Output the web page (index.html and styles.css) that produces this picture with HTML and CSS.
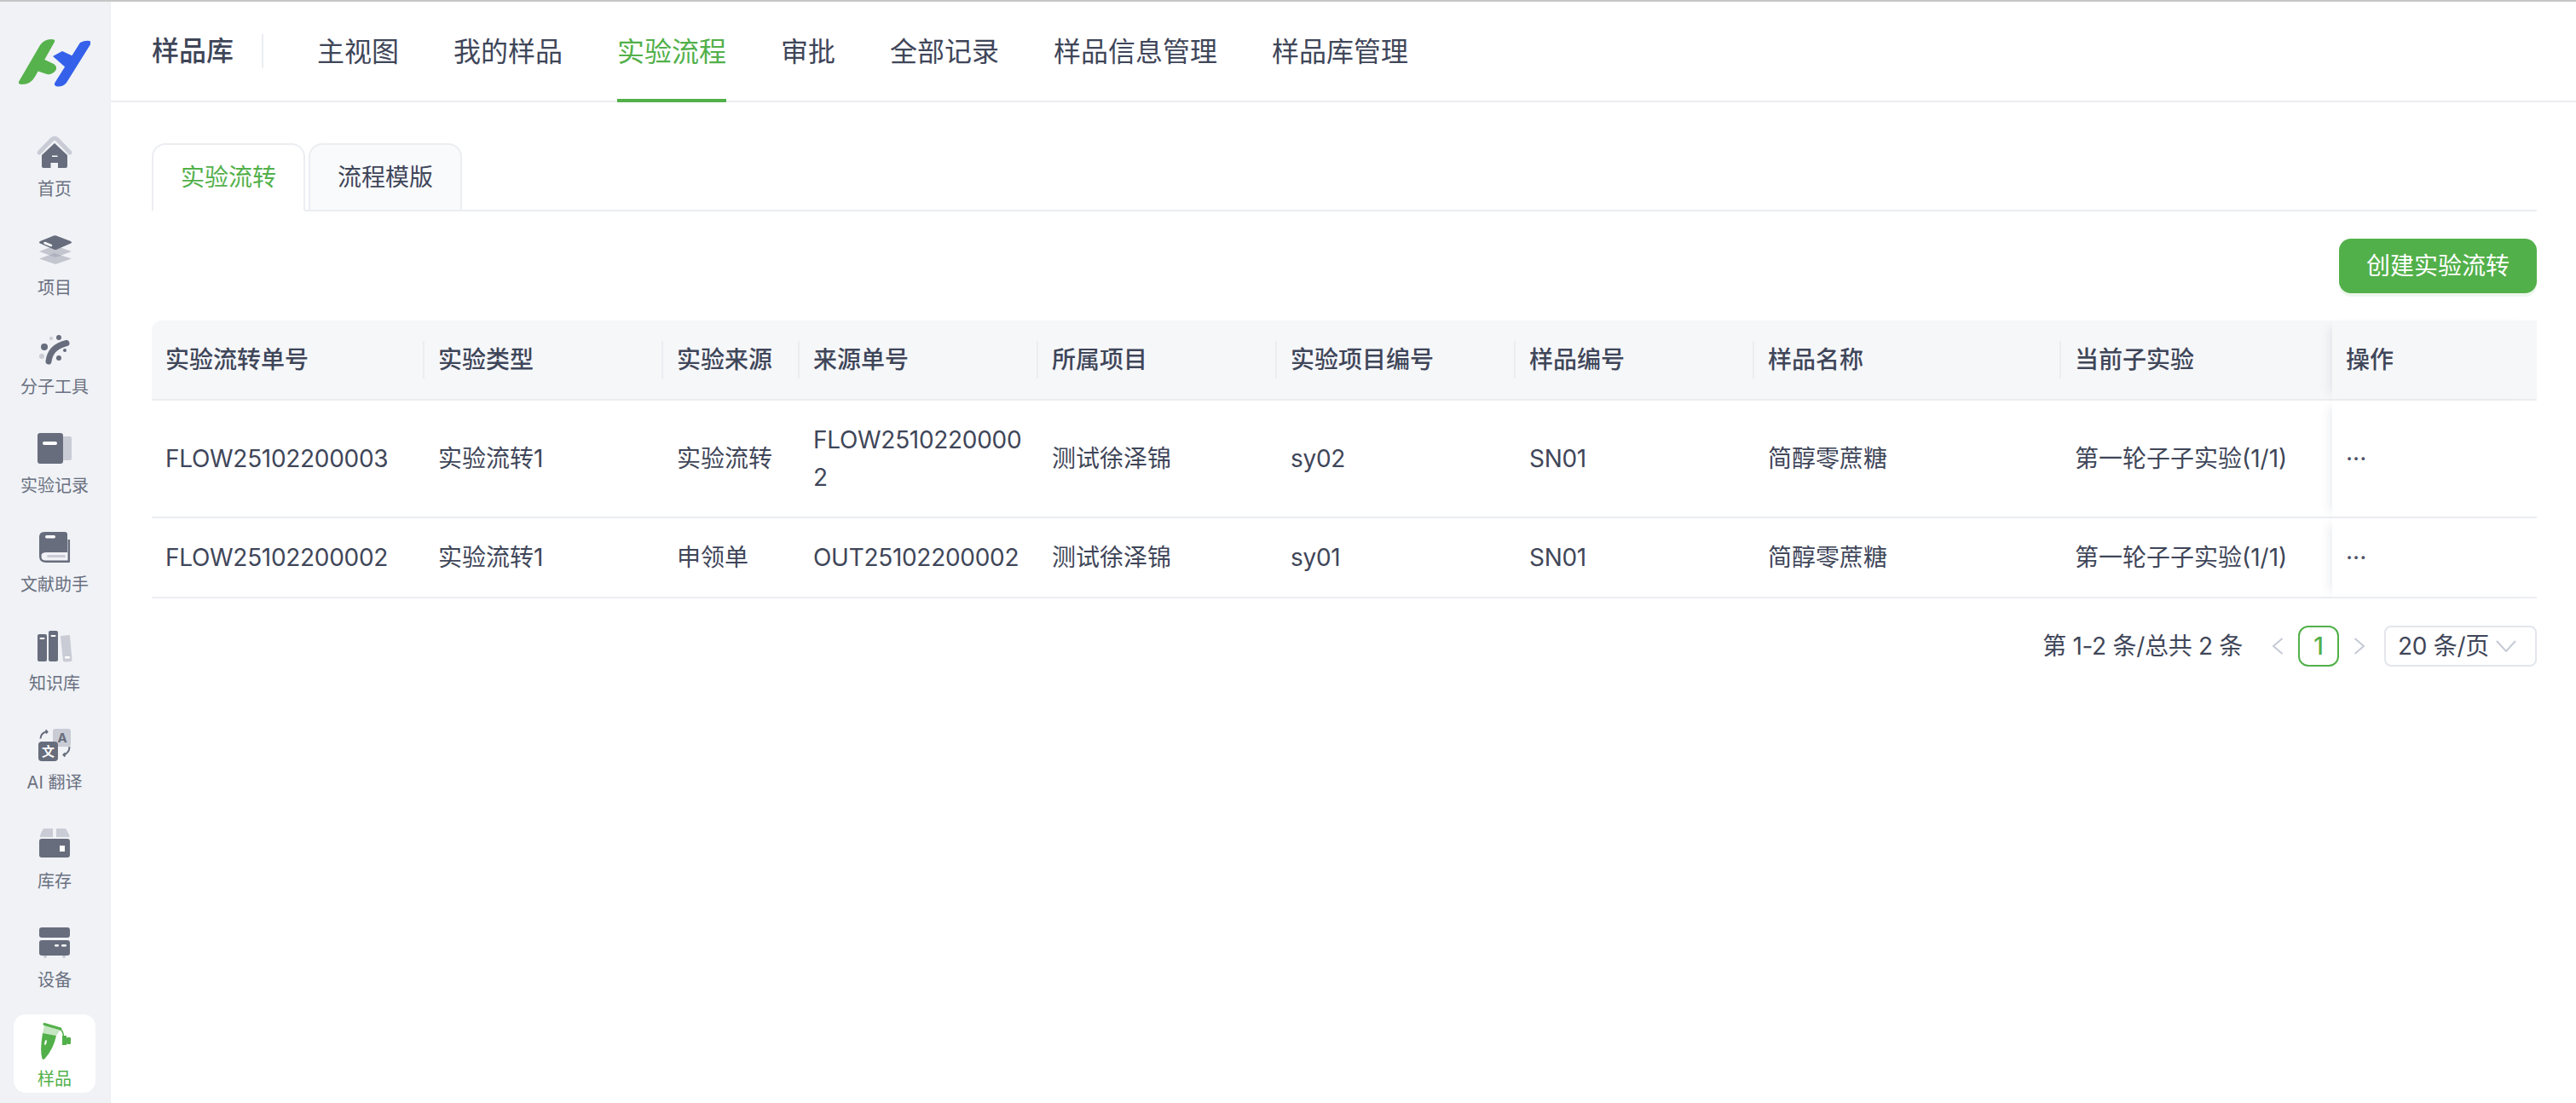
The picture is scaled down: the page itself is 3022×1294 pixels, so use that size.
FILE: index.html
```html
<!DOCTYPE html>
<html lang="zh-CN">
<head>
<meta charset="utf-8">
<title>样品库</title>
<link rel="stylesheet" href="styles.css">
</head>
<body>
<div class="top-line"></div>
<div class="app">
  <aside class="sidebar">
    <div class="logo">
      <svg class="logo-svg" viewBox="22 46 84 56" width="84" height="56">
        <path class="g" d="M47 53Q52 46 60 46Q66 46 63.500 50L41 90Q36 99 26 99Q20 99 22.500 95Z"/>
        <path class="g" d="M46 67L63 75Q68 78 65 83Q61 88 55 87L40 82Z"/>
        <path class="b" d="M94 50Q100 47 105 48Q108 49 105.500 53L78 97Q74 102 67 101.500Q62 100 65 96Z"/>
        <path class="b" d="M62 66L73 60L86 66L79 81Z"/>
      </svg>
    </div>
    <nav class="side-nav">
      <a class="side-item">
        <svg class="ico" viewBox="0 0 48 48"><path class="l-s" d="M6 25L21 9.500Q24 7 27 9.500L42 25" /><path class="d" d="M24 14L39 28V41Q39 43 37 43H28V37H19.500V43H11Q9 43 9 41V28Z"/><rect class="w" x="21" y="28.500" width="6.500" height="1.500"/></svg>
        <span>首页</span>
      </a>
      <a class="side-item">
        <svg class="ico" viewBox="0 0 48 48"><path class="lo" d="M24 27L44 33.500L25 40L6 33.500Z"/><path class="lo" d="M24 18L44 25L25 32L6 25Z"/><path class="d" d="M23 6.500Q25 6 26 6.500L43 13Q45 14.500 43 15.500L27 22.500Q25 23.500 23 22.500L7 15.500Q5 14.500 7 13Z"/><path class="w-s" d="M12.500 15L20 18"/></svg>
        <span>项目</span>
      </a>
      <a class="side-item">
        <svg class="ico" viewBox="0 0 48 48"><path class="d-s" d="M17 38Q19 21 38 16.500"/><circle class="d" cx="12" cy="21" r="4"/><circle class="d" cx="29" cy="10" r="3"/><circle class="l" cx="20" cy="11" r="2"/><circle class="l" cx="9" cy="32" r="3"/><circle class="d" cx="29" cy="34" r="3"/><circle class="d" cx="36" cy="25" r="2"/></svg>
        <span>分子工具</span>
      </a>
      <a class="side-item">
        <svg class="ico" viewBox="0 0 48 48"><rect class="l" x="32" y="10" width="12" height="28" rx="2"/><rect class="d" x="4" y="6" width="30" height="36" rx="3"/><rect class="w" x="10" y="16" width="17" height="4" rx="2"/></svg>
        <span>实验记录</span>
      </a>
      <a class="side-item">
        <svg class="ico" viewBox="0 0 48 48"><path class="d" d="M12 6H36Q39 6 39 9V30H14Q10 30 8 33L6 35V12Q6 6 12 6Z"/><path class="d-t" d="M40.800 15V40.800H14Q7.300 40.800 7.300 35V14"/><rect class="l" x="15" y="33" width="22" height="3" rx="1.500"/><rect class="w" x="13" y="10" width="12" height="3.500" rx="1.700"/></svg>
        <span>文献助手</span>
      </a>
      <a class="side-item">
        <svg class="ico" viewBox="0 0 48 48"><rect class="d" x="4" y="10" width="11" height="32" rx="2"/><rect class="d" x="17" y="6" width="11" height="36" rx="2"/><path class="l" d="M32 12L41 11Q42 11 42 12L44.500 40Q44.500 42 43 42L36 42.500Q34.500 42.500 34 41L31 13Q31 12 32 12Z"/><rect class="w" x="6.500" y="14" width="6" height="2" rx="1"/><rect class="w" x="19.500" y="11" width="6" height="2" rx="1"/><rect class="w" x="36" y="36" width="6" height="2.500" rx="1"/></svg>
        <span>知识库</span>
      </a>
      <a class="side-item">
        <svg class="ico" viewBox="0 0 48 48"><rect class="l" x="22" y="5" width="21" height="21" rx="3"/><text class="ico-a" x="33" y="21" text-anchor="middle">A</text><rect class="d" x="5" y="20" width="23" height="23" rx="4"/><text class="ico-wen" x="16.500" y="37" text-anchor="middle">文</text><path class="thin" d="M7.500 16.500Q8 10 14 8.500M41.500 26Q41.500 33 35 35.500"/><path class="thin" d="M13.500 6.500L15.500 8.500L14 10.500M36.500 33.500L34.500 35.500L36.500 37.500"/></svg>
        <span>AI 翻译</span>
      </a>
      <a class="side-item">
        <svg class="ico" viewBox="0 0 48 48"><path class="l" d="M12 6H22V16H7Q7 14 7.500 13L10 7.500Q10.500 6 12 6Z"/><path class="l" d="M26 6H36Q37.500 6 38 7.500L41 13Q41.500 14 41.500 16H26Z"/><rect class="d" x="6" y="18" width="36" height="22" rx="3"/><rect class="w" x="30" y="26" width="6" height="7"/></svg>
        <span>库存</span>
      </a>
      <a class="side-item">
        <svg class="ico" viewBox="0 0 48 48"><rect class="l" x="11" y="36" width="4" height="6" rx="2"/><rect class="l" x="33" y="36" width="4" height="6" rx="2"/><rect class="d" x="6" y="6" width="36" height="12" rx="3"/><rect class="d" x="6" y="21" width="36" height="18" rx="3"/><rect class="w" x="24" y="26" width="5" height="2.500" rx="1.200"/><rect class="w" x="32" y="26" width="6" height="2.500" rx="1.200"/></svg>
        <span>设备</span>
      </a>
      <a class="side-item active">
        <svg class="ico" viewBox="0 0 48 48"><path class="gl" d="M12 5L31 10L26 17L10 14Z"/><path class="g" d="M10 14L26 17Q23 32 13 43.500Q11 46 9.500 44Q6.500 35 10 14Z"/><ellipse class="w" cx="13.500" cy="25" rx="1.200" ry="3" transform="rotate(15 13.500 25)"/><path class="g-s" d="M12 3.500L31 9"/><path class="g-t" d="M30 9Q34 11 34.500 18"/><rect class="g" x="33" y="17" width="5" height="11"/><rect class="g" x="38" y="19" width="5" height="8" rx="1"/></svg>
        <span>样品</span>
      </a>
    </nav>
  </aside>
  <div class="main">
    <header class="topbar">
      <div class="brand">样品库</div>
      <nav class="top-nav">
        <a class="top-item">主视图</a>
        <a class="top-item">我的样品</a>
        <a class="top-item active">实验流程</a>
        <a class="top-item">审批</a>
        <a class="top-item">全部记录</a>
        <a class="top-item">样品信息管理</a>
        <a class="top-item">样品库管理</a>
      </nav>
    </header>
    <section class="content">
      <div class="tabs">
        <a class="tab active">实验流转</a>
        <a class="tab">流程模版</a>
      </div>
      <div class="toolbar"><button class="btn-primary">创建实验流转</button></div>
      <table class="grid">
        <colgroup>
          <col class="c320"><col class="c280"><col class="c160"><col class="c280"><col class="c280"><col class="c280"><col class="c280"><col class="c360"><col class="c318"><col class="c240">
        </colgroup>
        <thead>
          <tr>
            <th class="first">实验流转单号</th><th>实验类型</th><th>实验来源</th><th>来源单号</th><th>所属项目</th><th>实验项目编号</th><th>样品编号</th><th>样品名称</th><th>当前子实验</th><th class="op">操作</th>
          </tr>
        </thead>
        <tbody>
          <tr>
            <td class="lat">FLOW25102200003</td><td>实验流转1</td><td>实验流转</td><td class="lat wrap">FLOW25102200002</td><td>测试徐泽锦</td><td class="lat">sy02</td><td class="lat">SN01</td><td>简醇零蔗糖</td><td>第一轮子子实验(1/1)</td><td class="op"><span class="more">···</span></td>
          </tr>
          <tr>
            <td class="lat">FLOW25102200002</td><td>实验流转1</td><td>申领单</td><td class="lat wrap">OUT25102200002</td><td>测试徐泽锦</td><td class="lat">sy01</td><td class="lat">SN01</td><td>简醇零蔗糖</td><td>第一轮子子实验(1/1)</td><td class="op"><span class="more">···</span></td>
          </tr>
        </tbody>
      </table>
      <div class="pager">
        <span class="total">第 1-2 条/总共 2 条</span>
        <span class="arrow"><svg viewBox="0 0 14 20" width="14" height="20"><path d="M12.500 1L2 10L12.500 19"/></svg></span>
        <span class="page current">1</span>
        <span class="arrow"><svg viewBox="0 0 14 20" width="14" height="20"><path d="M1.500 1L12 10L1.500 19"/></svg></span>
        <span class="size"><span class="size-text">20 条/页</span><svg viewBox="0 0 24 14" width="24" height="14"><path d="M1 1L12 13L23 1"/></svg></span>
      </div>
    </section>
  </div>
</div>
</body>
</html>
```
FILE: styles.css
```css
* { box-sizing: border-box; }
html, body { margin: 0; height: 100%; overflow: hidden; }
body {
  background: #fff;
  color: #3f4659;
  font-family: Inter, "Noto Sans CJK SC", sans-serif;
  font-size: 28px;
  line-height: 44px;
  display: flex;
  flex-direction: column;
}
.top-line { height: 2px; background: #c6c6c6; flex: none; }
.app { flex: 1; display: flex; min-height: 0; }

/* sidebar */
.sidebar {
  width: 130px;
  flex: none;
  background: #f0f2f6;
  border-right: 2px solid #eef0f4;
}
.logo { height: 144px; padding: 44px 0 0 22px; }
.logo-svg { display: block; }
.logo-svg .g { fill: #56b24c; }
.logo-svg .b { fill: #3560ea; }
.side-nav { display: flex; flex-direction: column; gap: 24px; padding-left: 16px; }
.side-item {
  width: 96px;
  height: 92px;
  border-radius: 14px;
  padding-top: 8px;
  display: flex;
  flex-direction: column;
  align-items: center;
  color: #6a7080;
  font-size: 20px;
  line-height: 28px;
}
.side-item span { margin-top: 6px; white-space: nowrap; }
.side-item.active { background: #fff; color: #52b04a; }
.ico { width: 48px; height: 48px; flex: none; display: block; }
.ico .d { fill: #676d7c; }
.ico .l { fill: #c9ccd5; }
.ico .lo { fill: #9fa3af; opacity: 0.55; }
.ico .w { fill: #fff; }
.ico .g { fill: #52b04a; }
.ico .gl { fill: #c6e6c3; }
.ico .l-s { fill: none; stroke: #c9ccd5; stroke-width: 5; stroke-linecap: round; stroke-linejoin: round; }
.ico .d-s { fill: none; stroke: #676d7c; stroke-width: 7; stroke-linecap: round; }
.ico .d-t { fill: none; stroke: #676d7c; stroke-width: 2.500; stroke-linejoin: round; }
.ico .w-s { fill: none; stroke: #fff; stroke-width: 2.500; stroke-linecap: round; }
.ico .g-s { fill: none; stroke: #52b04a; stroke-width: 3; stroke-linecap: round; }
.ico .g-t { fill: none; stroke: #52b04a; stroke-width: 1.500; }
.ico .thin { fill: none; stroke: #676d7c; stroke-width: 2; }
.ico-a { fill: #676d7c; font-size: 15px; font-weight: 700; font-family: Inter, sans-serif; }
.ico-wen { fill: #fff; font-size: 15px; font-weight: 700; font-family: "Noto Sans CJK SC", sans-serif; }

/* top bar */
.main { flex: 1; min-width: 0; display: flex; flex-direction: column; }
.topbar {
  height: 118px;
  flex: none;
  border-bottom: 2px solid #ebedf1;
  padding-left: 48px;
  display: flex;
  align-items: stretch;
  font-size: 32px;
}
.brand {
  font-weight: 500;
  align-self: center;
  height: 40px;
  line-height: 40px;
  padding-right: 33px;
  margin-right: 63px;
  border-right: 2px solid #ebedf1;
}
.top-nav { display: flex; gap: 64px; margin-bottom: -2px; }
.top-item {
  display: flex;
  align-items: center;
  border-bottom: 4px solid transparent;
  padding-top: 3px;
  white-space: nowrap;
}
.top-item.active { color: #52b04a; border-bottom-color: #52b04a; }

/* content */
.content { padding: 48px 46px 0 48px; }
.tabs { display: flex; gap: 4px; border-bottom: 2px solid #ebedf1; height: 80px; }
.tab {
  width: 180px;
  height: 80px;
  border: 2px solid #ebedf1;
  border-radius: 16px 16px 0 0;
  background: #f9fafb;
  display: flex;
  align-items: center;
  justify-content: center;
}
.tab.active { background: #fff; border-bottom-color: #fff; color: #52b04a; }
.toolbar { display: flex; justify-content: flex-end; padding: 32px 0; }
.btn-primary {
  height: 64px;
  padding: 0 32px;
  border: 0;
  border-radius: 14px;
  background: #52b04a;
  color: #fff;
  font: inherit;
  line-height: 64px;
  box-shadow: 0 4px 0 rgba(82, 176, 74, 0.1);
}

/* table */
.grid { width: 2798px; table-layout: fixed; border-collapse: separate; border-spacing: 0; }
.c160 { width: 160px; }
.c240 { width: 240px; }
.c280 { width: 280px; }
.c318 { width: 318px; }
.c320 { width: 320px; }
.c360 { width: 360px; }
.grid th, .grid td {
  padding: 24px 16px;
  text-align: left;
  border-bottom: 2px solid #ebedf1;
  position: relative;
  background: #fff;
}
.grid th { background: #f6f7f9; font-weight: 500; white-space: nowrap; }
.grid th.first { border-top-left-radius: 12px; }
.grid th:not(:nth-last-child(-n+2))::after {
  content: "";
  position: absolute;
  right: 0;
  top: 24px;
  height: 44px;
  width: 2px;
  background: #ebedf1;
}
.grid .op { box-shadow: -10px 0 12px -8px rgba(60, 70, 100, 0.12); z-index: 1; }
.grid td { white-space: nowrap; }
.grid td.wrap { white-space: normal; word-break: break-all; }
.lat { letter-spacing: -0.3px; }
.more { font-weight: 400; color: #4d5467; }

/* pager */
.pager { display: flex; justify-content: flex-end; align-items: center; margin-top: 32px; height: 48px; }
.total { margin-right: 17px; white-space: nowrap; letter-spacing: -0.3px; }
.arrow { width: 48px; height: 48px; display: flex; align-items: center; justify-content: center; }
.arrow svg path, .size svg path { fill: none; stroke: #c5cad6; stroke-width: 2; }
.page {
  width: 48px;
  height: 48px;
  border: 2px solid #52b04a;
  border-radius: 12px;
  color: #52b04a;
  font-weight: 500;
  display: flex;
  align-items: center;
  justify-content: center;
}
.size {
  width: 179px;
  height: 48px;
  margin-left: 5px;
  border: 2px solid #e3e6ec;
  border-radius: 8px;
  padding: 0 22px 0 14px;
  display: flex;
  align-items: center;
  justify-content: space-between;
  white-space: nowrap;
}
.size-text { letter-spacing: -0.3px; }
```
